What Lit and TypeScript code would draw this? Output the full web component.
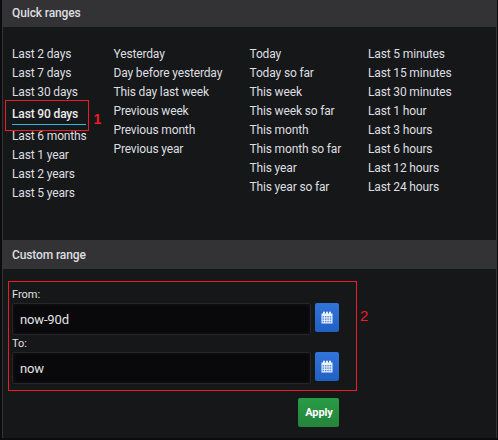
import { LitElement, html, css, svg } from "lit";
import { customElement, property } from "lit/decorators.js";
import { classMap } from "lit/directives/class-map.js";

const COLUMNS: string[][] = [
  ["Last 2 days", "Last 7 days", "Last 30 days", "Last 90 days", "Last 6 months", "Last 1 year", "Last 2 years", "Last 5 years"],
  ["Yesterday", "Day before yesterday", "This day last week", "Previous week", "Previous month", "Previous year"],
  ["Today", "Today so far", "This week", "This week so far", "This month", "This month so far", "This year", "This year so far"],
  ["Last 5 minutes", "Last 15 minutes", "Last 30 minutes", "Last 1 hour", "Last 3 hours", "Last 6 hours", "Last 12 hours", "Last 24 hours"],
];

const CELLS = [0, 1, 2].flatMap((r) => [0, 1, 2, 3].map((c) => [c, r]));

@customElement("date-field")
export class DateField extends LitElement {
  @property() label = "";
  @property() value = "";

  static styles = css`
    :host { display: block; height: 49px; }
    .label { display: block; box-sizing: border-box; padding-top: 1px; font-size: 11px; line-height: 16px; height: 17px; color: #e0e1e2; }
    .row { display: flex; align-items: flex-start; gap: 4px; }
    .input {
      box-sizing: border-box; width: 299px; height: 32px; padding: 0 7px;
      border: 1px solid #262628; border-radius: 2px; background: #09090b;
      box-shadow: inset 0 0 4px #151517;
      font-size: 13px; line-height: 31px; letter-spacing: -0.15px; color: #e3e3e3;
    }
    .pick {
      width: 24px; height: 29px; padding: 0; border: 0; border-radius: 2px;
      background: linear-gradient(#3274d9, #1f60c4);
      display: flex; align-items: center; justify-content: center;
    }
  `;

  render() {
    return html`
      <span class="label">${this.label}</span>
      <div class="row">
        <div class="input">${this.value}</div>
        <button class="pick" aria-label="Pick date">
          <svg width="12" height="13" viewBox="0 0 12 13">
            <path fill="#e9effb" d="M.5 2.500H2V1.500q0-1 1-1t1 1v1h1V1.500q0-1 1-1t1 1v1h1V1.500q0-1 1-1t1 1v1h1.500V12.500H.5z"/>
            ${CELLS.map(([c, r]) => svg`<rect x=${1.5 + c * 2.4} y=${5 + r * 2.4} width="1.5" height="1.5" fill="#5b90e0"/>`)}
          </svg>
        </button>
      </div>
    `;
  }
}

@customElement("app-root")
export class AppRoot extends LitElement {
  static styles = css`
    :host {
      display: block; position: relative; box-sizing: border-box;
      width: 498px; height: 440px; padding: 0 1px 2px 2px; overflow: hidden;
      background: #0c0b0d; color: #dedfe0;
      font-family: Roboto, "Liberation Sans", sans-serif; font-size: 12px;
    }
    .panel {
      box-sizing: border-box; height: 438px; background: #161719;
      border-left: 1px solid #343436; border-right: 1px solid #343436;
    }
    .title {
      box-sizing: border-box; height: 29px; padding-left: 9px; margin: 0 -1px 0 0;
      background: #333335; font-size: 12px; font-weight: 500; line-height: 30px; letter-spacing: -0.12px;
    }
    .title.first { height: 27px; line-height: 27px; }
    .ranges {
      box-sizing: border-box; height: 213px; padding: 17px 0 0 9px;
      display: grid; grid-template-columns: 101.500px 136px 118.500px 1fr;
      letter-spacing: -0.15px;
    }
    .ranges ul { margin: 0; padding: 0; list-style: none; }
    .ranges li { line-height: 20px; height: 19px; white-space: nowrap; }
    .ranges li.active {
      box-sizing: border-box; width: 74px; height: 24px; margin-bottom: 1px; padding-top: 3px;
      border-bottom: 1px solid #33b5e5; font-weight: 500; color: #ececec;
    }
    .custom { padding: 17px 0 0 9px; }
    .apply {
      display: block; width: 41px; height: 29px; margin: 14px 0 0 286px; padding: 1px 0 0 1px;
      border: 0; border-radius: 2px; background: linear-gradient(#299c46, #23843b);
      color: #fff; font: 700 11px/28px Roboto, sans-serif; letter-spacing: -0.1px; text-align: center;
    }
    .mark { position: absolute; box-sizing: border-box; border: 1px solid #ed1c24; }
    .mark.one { left: 5px; top: 100px; width: 84px; height: 31px; }
    .mark.two { left: 8px; top: 281px; width: 349px; height: 110px; }
    .num { position: absolute; color: #ed1c24; font: 15px/16px "Liberation Sans", sans-serif; }
    .num.one { left: 93.500px; top: 111px; font-weight: 700; font-size: 14px; }
    .num.two { left: 360px; top: 308px; }
  `;

  render() {
    return html`
      <div class="panel">
        <div class="title first">Quick ranges</div>
        <div class="ranges">
          ${COLUMNS.map((items) => html`
            <ul>
              ${items.map((t) => html`<li class=${classMap({ active: t === "Last 90 days" })}>${t}</li>`)}
            </ul>`)}
        </div>
        <div class="title">Custom range</div>
        <div class="custom">
          <date-field label="From:" value="now-90d"></date-field>
          <date-field label="To:" value="now"></date-field>
          <button class="apply">Apply</button>
        </div>
      </div>
      <div class="mark one"></div><span class="num one">1</span>
      <div class="mark two"></div><span class="num two">2</span>
    `;
  }
}
